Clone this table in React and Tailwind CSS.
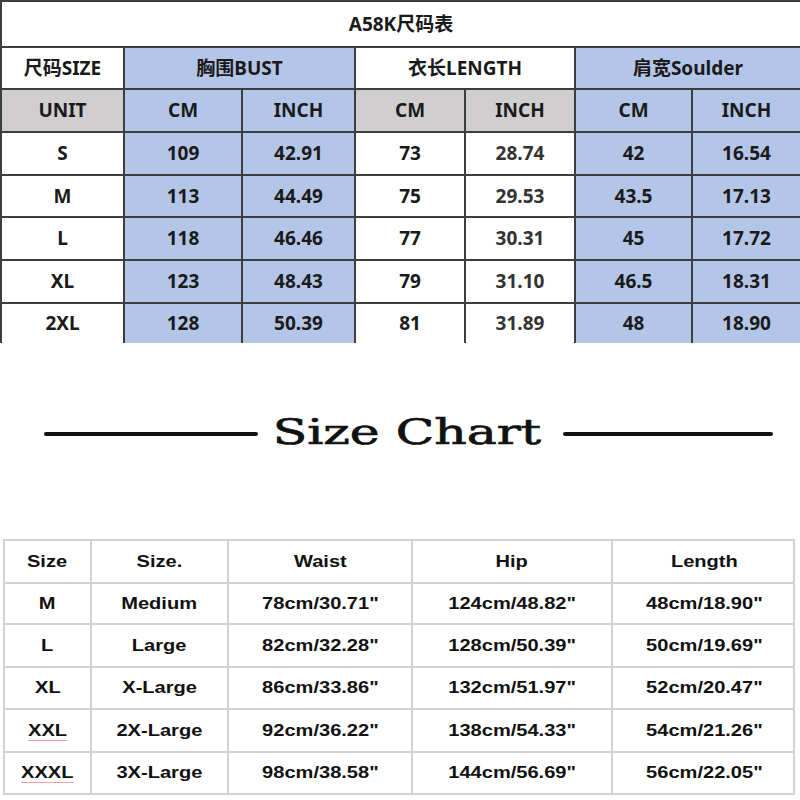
const bust = "bg-[#b4c6e7]";
const gray = "bg-[#d0cece]";

const cn = "border-t-2 border-l-2 border-[#3d3d3d] flex items-center justify-center";

const rows = [
  ["S", "109", "42.91", "73", "28.74", "42", "16.54"],
  ["M", "113", "44.49", "75", "29.53", "43.5", "17.13"],
  ["L", "118", "46.46", "77", "30.31", "45", "17.72"],
  ["XL", "123", "48.43", "79", "31.10", "46.5", "18.31"],
  ["2XL", "128", "50.39", "81", "31.89", "48", "18.90"],
];

const chart = [
  ["M", "Medium", "78cm/30.71\"", "124cm/48.82\"", "48cm/18.90\""],
  ["L", "Large", "82cm/32.28\"", "128cm/50.39\"", "50cm/19.69\""],
  ["XL", "X-Large", "86cm/33.86\"", "132cm/51.97\"", "52cm/20.47\""],
  ["XXL", "2X-Large", "92cm/36.22\"", "138cm/54.33\"", "54cm/21.26\""],
  ["XXXL", "3X-Large", "98cm/38.58\"", "144cm/56.69\"", "56cm/22.05\""],
];

// which data columns get the blue fill
const rowBg = ["bg-white", bust, bust, "bg-white", "bg-white", bust, bust];

const TopTable = () => {
  return (
    <div
      className="grid w-[800px] h-[343px] grid-cols-[123px_118px_113px_110px_110px_117px_109px] grid-rows-[46px_42px_43px_43px_42px_43px_43px_41px] text-[#1a1a1a] font-bold"
      style={{ fontFamily: '"Noto Sans", "Noto Sans CJK SC", sans-serif' }}
    >
      {/* title */}
      <div className={`${cn} col-span-7 bg-white text-[19px]`}>A58K尺码表</div>

      {/* group headers */}
      <div className={`${cn} bg-white text-[19px]`}>尺码SIZE</div>
      <div className={`${cn} col-span-2 ${bust} text-[19px]`}>胸围BUST</div>
      <div className={`${cn} col-span-2 bg-white text-[19px]`}>衣长LENGTH</div>
      <div className={`${cn} col-span-2 ${bust} text-[19px]`}>肩宽Soulder</div>

      {/* units */}
      <div className={`${cn} ${gray} text-[19px]`}>UNIT</div>
      <div className={`${cn} ${bust} text-[19px]`}>CM</div>
      <div className={`${cn} ${bust} text-[19px]`}>INCH</div>
      <div className={`${cn} ${gray} text-[19px]`}>CM</div>
      <div className={`${cn} ${gray} text-[19px]`}>INCH</div>
      <div className={`${cn} ${bust} text-[19px]`}>CM</div>
      <div className={`${cn} ${bust} text-[19px]`}>INCH</div>

      {rows.map((r) =>
        r.map((v, i) => (
          <div
            key={r[0] + i}
            className={`${cn} ${rowBg[i]} text-[19px] ${i === 4 ? "text-[#333]" : ""}`}
          >
            {v}
          </div>
        ))
      )}
    </div>
  );
};

const ChartTitle = () => {
  return (
    <div className="h-[196px] flex items-center pl-[44px] pr-[27px] pb-[14px]">
      <div className="w-[214px] h-[4px] rounded-full bg-[#111]" />
      <div className="flex-1 flex justify-center pr-[8px]">
        <span
          className="inline-block text-[36px] leading-none text-[#111] scale-x-[1.4] -mt-[4px] [-webkit-text-stroke:0.7px_#111]"
          style={{ fontFamily: '"DejaVu Serif", serif' }}
        >
          Size Chart
        </span>
      </div>
      <div className="w-[210px] h-[4px] rounded-full bg-[#111]" />
    </div>
  );
};

const cell = "border-t-2 border-l-2 border-[#d2d2d2] flex items-center justify-center";

const BottomTable = () => {
  return (
    <div className="pl-[3px]">
      <div
        className="grid w-[792px] grid-cols-[87px_137px_184px_200px_184px] grid-rows-[43px_41px_43px_42px_43px_42px] border-r-2 border-b-2 border-[#d2d2d2] text-[17px] font-bold text-[#111]"
        style={{ fontFamily: '"Liberation Sans", Arial, sans-serif' }}
      >
        {["Size", "Size.", "Waist", "Hip", "Length"].map((h) => (
          <div key={h} className={cell}>
            <span className="inline-block scale-x-[1.18]">{h}</span>
          </div>
        ))}
        {chart.map((r) =>
          r.map((v, i) => (
            <div key={r[0] + i} className={cell}>
              {i === 0 && (v === "XXL" || v === "XXXL") ? (
                <span className="inline-block scale-x-[1.18] underline decoration-[#f0a3a3] decoration-1 underline-offset-[4px]">
                  {v}
                </span>
              ) : (
                <span className="inline-block scale-x-[1.18]">{v}</span>
              )}
            </div>
          ))
        )}
      </div>
    </div>
  );
};

export default function App() {
  return (
    <div className="w-[800px] h-[800px] bg-white overflow-hidden">
      <TopTable />
      <ChartTitle />
      <BottomTable />
    </div>
  );
}
